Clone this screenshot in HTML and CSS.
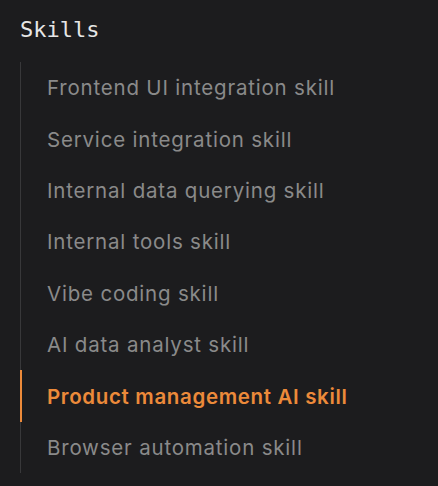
FILE: index.html
```html
<!DOCTYPE html>
<html>
<head>
<meta charset="utf-8">
<link rel="stylesheet" href="styles.css">
</head>
<body>
<div class="panel">
  <h2 class="title">Skills</h2>
  <ul class="list">
    <li class="item">Frontend UI integration skill</li>
    <li class="item">Service integration skill</li>
    <li class="item">Internal data querying skill</li>
    <li class="item">Internal tools skill</li>
    <li class="item">Vibe coding skill</li>
    <li class="item">AI data analyst skill</li>
    <li class="item active">Product management AI skill</li>
    <li class="item">Browser automation skill</li>
  </ul>
</div>
</body>
</html>
```
FILE: styles.css
```css
html, body {
  margin: 0;
  padding: 0;
  background: #1c1c1e;
}
.panel {
  padding: 15px 20px 0 20px;
}
.title {
  margin: 0;
  font-family: "DejaVu Sans Mono", monospace;
  font-weight: normal;
  font-size: 22px;
  line-height: 30px;
  color: #e6e6e6;
}
.list {
  list-style: none;
  margin: 17px 0 0 0;
  padding: 0;
  border-left: 1px solid #38383a;
}
.item {
  font-family: Inter, sans-serif;
  font-size: 20.5px;
  letter-spacing: 0.8px;
  color: #8a8a8a;
  height: 51.4px;
  display: flex;
  align-items: center;
  padding-left: 25px;
  margin-left: -1px;
  border-left: 2px solid transparent;
}
.item.active {
  color: #ec8a3a;
  font-weight: 600;
  letter-spacing: 0.65px;
  border-left-color: #ec8a3a;
}
```
